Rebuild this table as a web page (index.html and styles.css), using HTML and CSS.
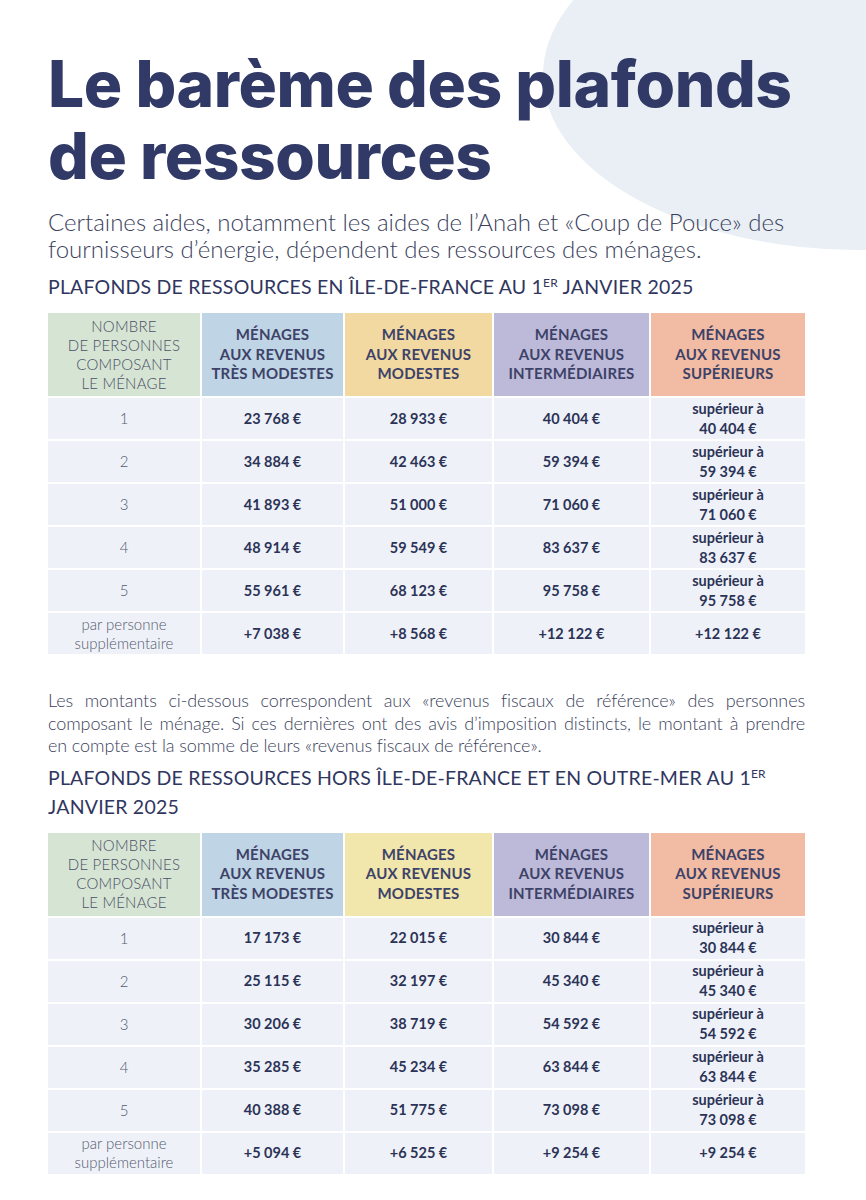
FILE: index.html
```html
<!DOCTYPE html>
<html lang="fr">
<head>
<meta charset="utf-8">
<title>Le barème des plafonds de ressources</title>
<link rel="stylesheet" href="styles.css">
</head>
<body>
<div class="sheet">
<div class="blob"></div>
<main class="page">
  <h1 class="title">Le barème des plafonds<br>de ressources</h1>
  <p class="intro">Certaines aides, notamment les aides de l’Anah et «Coup de Pouce» des fournisseurs d’énergie, dépendent des ressources des ménages.</p>

  <h2 class="section">PLAFONDS DE RESSOURCES EN ÎLE-DE-FRANCE AU 1<sup>ER</sup> JANVIER 2025</h2>
  <div class="table">
    <div class="th th-nb">NOMBRE<br>DE PERSONNES<br>COMPOSANT<br>LE MÉNAGE</div>
    <div class="th th-blue">MÉNAGES<br>AUX REVENUS<br>TRÈS MODESTES</div>
    <div class="th th-orange">MÉNAGES<br>AUX REVENUS<br>MODESTES</div>
    <div class="th th-violet">MÉNAGES<br>AUX REVENUS<br>INTERMÉDIAIRES</div>
    <div class="th th-salmon">MÉNAGES<br>AUX REVENUS<br>SUPÉRIEURS</div>

    <div class="td td-nb">1</div><div class="td">23 768 €</div><div class="td">28 933 €</div><div class="td">40 404 €</div><div class="td">supérieur à<br>40 404 €</div>
    <div class="td td-nb">2</div><div class="td">34 884 €</div><div class="td">42 463 €</div><div class="td">59 394 €</div><div class="td">supérieur à<br>59 394 €</div>
    <div class="td td-nb">3</div><div class="td">41 893 €</div><div class="td">51 000 €</div><div class="td">71 060 €</div><div class="td">supérieur à<br>71 060 €</div>
    <div class="td td-nb">4</div><div class="td">48 914 €</div><div class="td">59 549 €</div><div class="td">83 637 €</div><div class="td">supérieur à<br>83 637 €</div>
    <div class="td td-nb">5</div><div class="td">55 961 €</div><div class="td">68 123 €</div><div class="td">95 758 €</div><div class="td">supérieur à<br>95 758 €</div>
    <div class="td td-nb">par personne<br>supplémentaire</div><div class="td">+7 038 €</div><div class="td">+8 568 €</div><div class="td">+12 122 €</div><div class="td">+12 122 €</div>
  </div>

  <p class="note"><span class="line line-just">Les montants ci-dessous correspondent aux «revenus fiscaux de référence» des personnes</span><span class="line line-just">composant le ménage. Si ces dernières ont des avis d’imposition distincts, le montant à prendre</span><span class="line">en compte est la somme de leurs «revenus fiscaux de référence».</span></p>

  <h2 class="section section-2">PLAFONDS DE RESSOURCES HORS ÎLE-DE-FRANCE ET EN OUTRE-MER AU 1<sup>ER</sup><br>JANVIER 2025</h2>
  <div class="table">
    <div class="th th-nb">NOMBRE<br>DE PERSONNES<br>COMPOSANT<br>LE MÉNAGE</div>
    <div class="th th-blue">MÉNAGES<br>AUX REVENUS<br>TRÈS MODESTES</div>
    <div class="th th-yellow">MÉNAGES<br>AUX REVENUS<br>MODESTES</div>
    <div class="th th-violet">MÉNAGES<br>AUX REVENUS<br>INTERMÉDIAIRES</div>
    <div class="th th-salmon">MÉNAGES<br>AUX REVENUS<br>SUPÉRIEURS</div>

    <div class="td td-nb">1</div><div class="td">17 173 €</div><div class="td">22 015 €</div><div class="td">30 844 €</div><div class="td">supérieur à<br>30 844 €</div>
    <div class="td td-nb">2</div><div class="td">25 115 €</div><div class="td">32 197 €</div><div class="td">45 340 €</div><div class="td">supérieur à<br>45 340 €</div>
    <div class="td td-nb">3</div><div class="td">30 206 €</div><div class="td">38 719 €</div><div class="td">54 592 €</div><div class="td">supérieur à<br>54 592 €</div>
    <div class="td td-nb">4</div><div class="td">35 285 €</div><div class="td">45 234 €</div><div class="td">63 844 €</div><div class="td">supérieur à<br>63 844 €</div>
    <div class="td td-nb">5</div><div class="td">40 388 €</div><div class="td">51 775 €</div><div class="td">73 098 €</div><div class="td">supérieur à<br>73 098 €</div>
    <div class="td td-nb">par personne<br>supplémentaire</div><div class="td">+5 094 €</div><div class="td">+6 525 €</div><div class="td">+9 254 €</div><div class="td">+9 254 €</div>
  </div>
</main>
</div>
</body>
</html>
```

FILE: styles.css
```css
html, body {
  margin: 0;
  padding: 0;
  background: #ffffff;
}

body {
  font-family: "Lato", "Liberation Sans", sans-serif;
  color: #3a3f5e;
}

.sheet {
  position: relative;
  width: 866px;
  height: 1200px;
  overflow: hidden;
}

.blob {
  position: absolute;
  left: 543px;
  top: -100px;
  width: 634px;
  height: 350px;
  border-radius: 50%;
  background: #e9eff4;
  z-index: 0;
}

.page {
  position: relative;
  z-index: 1;
  padding: 48px 61px 0 48px;
}

.title {
  margin: 0;
  font-family: "Inter", "Lato", sans-serif;
  font-weight: 800;
  font-size: 64px;
  line-height: 72px;
  letter-spacing: -0.4px;
  color: #313a66;
}

.intro {
  margin: 16px 0 0 0;
  font-size: 24px;
  line-height: 27px;
  font-weight: 300;
  color: #3b3f5c;
}

.section {
  margin: 10px 0 0 0;
  font-size: 19.5px;
  line-height: 29px;
  font-weight: 400;
  letter-spacing: 0.2px;
  color: #2f3660;
}

.section sup {
  font-size: 12px;
  line-height: 0;
  vertical-align: 7px;
}

.table {
  display: grid;
  grid-template-columns: 152px 141px 147px 155px 154px;
  grid-auto-rows: 41px;
  grid-template-rows: 83px;
  gap: 2px;
  margin-top: 12px;
}

.th {
  display: flex;
  align-items: center;
  justify-content: center;
  text-align: center;
  font-size: 15px;
  line-height: 19.5px;
  font-weight: 700;
  color: #3d4268;
  letter-spacing: 0.2px;
}

.th-nb {
  background: #d5e4d3;
  font-weight: 300;
  font-size: 15px;
  line-height: 19px;
  color: #4c5068;
}
.th-blue { background: #bfd4e4; }
.th-orange { background: #f2d9a2; }
.th-yellow { background: #f1e6ab; }
.th-violet { background: #bdbad9; }
.th-salmon { background: #f2bba3; }

.td {
  display: flex;
  align-items: center;
  justify-content: center;
  text-align: center;
  background: #eef2f8;
  font-size: 14.5px;
  line-height: 20px;
  font-weight: 700;
  color: #2c3357;
}

.td-nb {
  font-weight: 300;
  font-size: 15px;
  line-height: 19px;
  color: #55596f;
}

.note {
  margin: 35px 0 0 0;
  width: 757px;
  font-size: 18px;
  line-height: 22.5px;
  font-weight: 300;
  letter-spacing: -0.1px;
  color: #3b3f5c;
}

.line {
  display: block;
  white-space: nowrap;
}

.line-just {
  white-space: normal;
  text-align: justify;
  text-align-last: justify;
}

.section-2 {
  margin-top: 6px;
}
```
